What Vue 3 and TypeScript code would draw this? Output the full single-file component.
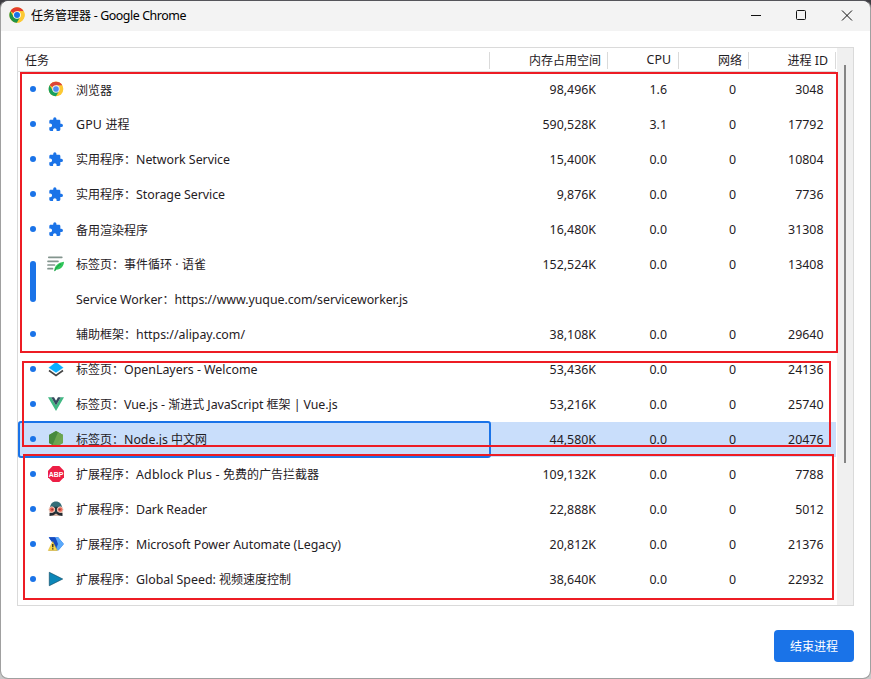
<script setup lang="ts">
interface Row {
  icon: string
  label: string
  width: number
  mem?: string
  cpu?: string
  net?: string
  pid?: string
  group?: boolean
  child?: boolean
  selected?: boolean
}

const rows: Row[] = [
  { icon: 'chrome', label: '浏览器', width: 36, mem: '98,496K', cpu: '1.6', net: '0', pid: '3048' },
  { icon: 'puzzle', label: 'GPU 进程', width: 53.5, mem: '590,528K', cpu: '3.1', net: '0', pid: '17792' },
  { icon: 'puzzle', label: '实用程序：Network Service', width: 154, mem: '15,400K', cpu: '0.0', net: '0', pid: '10804' },
  { icon: 'puzzle', label: '实用程序：Storage Service', width: 149, mem: '9,876K', cpu: '0.0', net: '0', pid: '7736' },
  { icon: 'puzzle', label: '备用渲染程序', width: 72, mem: '16,480K', cpu: '0.0', net: '0', pid: '31308' },
  { icon: 'yuque', label: '标签页：事件循环 · 语雀', width: 130, mem: '152,524K', cpu: '0.0', net: '0', pid: '13408', group: true },
  { icon: '', label: 'Service Worker：https://www.yuque.com/serviceworker.js', width: 332, child: true },
  { icon: '', label: '辅助框架：https://alipay.com/', width: 169, mem: '38,108K', cpu: '0.0', net: '0', pid: '29640' },
  { icon: 'layers', label: '标签页：OpenLayers - Welcome', width: 181.5, mem: '53,436K', cpu: '0.0', net: '0', pid: '24136' },
  { icon: 'vue', label: '标签页：Vue.js - 渐进式 JavaScript 框架 | Vue.js', width: 261.5, mem: '53,216K', cpu: '0.0', net: '0', pid: '25740' },
  { icon: 'node', label: '标签页：Node.js 中文网', width: 131, mem: '44,580K', cpu: '0.0', net: '0', pid: '20476', selected: true },
  { icon: 'abp', label: '扩展程序：Adblock Plus - 免费的广告拦截器', width: 243, mem: '109,132K', cpu: '0.0', net: '0', pid: '7788' },
  { icon: 'dark', label: '扩展程序：Dark Reader', width: 131, mem: '22,888K', cpu: '0.0', net: '0', pid: '5012' },
  { icon: 'power', label: '扩展程序：Microsoft Power Automate (Legacy)', width: 265, mem: '20,812K', cpu: '0.0', net: '0', pid: '21376' },
  { icon: 'speed', label: '扩展程序：Global Speed: 视频速度控制', width: 215, mem: '38,640K', cpu: '0.0', net: '0', pid: '22932' },
]

const title = '任务管理器 - Google Chrome'

function runs(text: string) {
  const parts = text.match(/[\u0000-\u00ff]+|[^\u0000-\u00ff]+/g) ?? []
  return parts.map((t) => ({ t, latin: t.charCodeAt(0) < 256 }))
}

// Spreads the Latin runs of a label so that it takes the given width.
const vFit = {
  mounted(el: HTMLElement, binding: { value: number }) {
    const latin = Array.from(el.querySelectorAll<HTMLElement>('.latin'))
    const count = latin.reduce((n, s) => n + (s.textContent ?? '').length, 0)
    if (!count) return
    const gap = (binding.value - el.getBoundingClientRect().width) / count
    latin.forEach((s) => { s.style.letterSpacing = gap.toFixed(3) + 'px' })
  },
}
</script>

<template>
  <div class="desktop">
    <div class="window">
      <header class="titlebar">
        <svg class="logo" viewBox="0 0 48 48">
          <circle cx="24" cy="24" r="23" fill="#fcc934" />
          <path d="M24 24 4.1 12.5A23 23 0 0 1 43.9 12.5H24Z" fill="#e33b2e" />
          <path d="M4.1 12.5A23 23 0 0 0 24 47L34 29.7 24 24 14 29.7Z" fill="#1e9447" />
          <path d="M24 12.5h19.9A23 23 0 0 1 24 47l10-17.3Z" fill="#fcc934" />
          <circle cx="24" cy="24" r="11.5" fill="#fff" />
          <circle cx="24" cy="24" r="9" fill="#1a73e8" />
        </svg>
        <span class="title"><span v-fit="155" class="fit"><span v-for="(r, i) in runs(title)" :key="i" :class="{ latin: r.latin }">{{ r.t }}</span></span></span>
        <svg class="controls" viewBox="0 0 138 30">
          <path d="M19 14.500h10" />
          <rect x="64.500" y="9.500" width="9" height="9" rx="1" />
          <path d="m110 9.500 10 10m0-10-10 10" />
        </svg>
      </header>

      <main class="content">
        <div class="table">
          <div class="grid">
            <div class="head line">
              <span class="task"><b>任务</b></span>
              <span class="mem"><b>内存占用空间</b></span>
              <span class="cpu latin"><b>CPU</b></span>
              <span class="net"><b>网络</b></span>
              <span class="pid"><b>进程<span class="latin"> ID</span></b></span>
            </div>
            <div v-for="(row, i) in rows" :key="i" class="row line" :class="{ selected: row.selected }">
              <div class="task">
                <i v-if="!row.child" class="dot" :class="{ bar: row.group }"></i>
                <i v-else class="nodot"></i>
                <svg class="icon" viewBox="0 0 16 16">
                  <g v-if="row.icon === 'chrome'" transform="translate(.3 .3) scale(.32)">
                    <circle cx="24" cy="24" r="23" fill="#fcc934" />
                    <path d="M24 24 4.1 12.5A23 23 0 0 1 43.9 12.5H24Z" fill="#dc4437" />
                    <path d="M4.1 12.5A23 23 0 0 0 24 47L34 29.7 24 24 14 29.7Z" fill="#16a05d" />
                    <circle cx="24" cy="24" r="11.5" fill="#f1f1f1" />
                    <circle cx="24" cy="24" r="8.8" fill="#4c8bf5" />
                  </g>
                  <path v-else-if="row.icon === 'puzzle'" transform="translate(0 .6) scale(.65)" fill="#1a73e8" d="M20.5 11H19V7c0-1.1-.9-2-2-2h-4V3.500a2.500 2.500 0 0 0-5 0V5H4c-1.100 0-1.990.900-1.990 2v3.800H3.500c1.490 0 2.700 1.210 2.700 2.700s-1.210 2.700-2.700 2.700H2V20c0 1.100.900 2 2 2h3.800v-1.500c0-1.490 1.210-2.700 2.700-2.700s2.700 1.210 2.700 2.700V22H17c1.100 0 2-.900 2-2v-4h1.500a2.500 2.500 0 0 0 0-5z" />
                  <g v-else-if="row.icon === 'yuque'">
                    <path d="M.8 1.300h13M0 5.300h10M0 9h6.500M0 12.700h4.500" stroke="#83958e" stroke-width="1.700" stroke-linecap="round" />
                    <path d="M6.300 15.500C6 10 10 6.500 16 5.700c-.2 4-2.700 8-8 8Z" fill="#2fc659" />
                    <path d="M6.800 15C8 11.500 11 9 13 8" stroke="#178c43" stroke-width=".8" fill="none" />
                  </g>
                  <g v-else-if="row.icon === 'layers'">
                    <path d="m1 9.500 7 5 7-5" fill="none" stroke="#444" stroke-width="1.600" />
                    <path d="M8 .7.3 6.700 8 12l7.700-5.300Z" fill="#0aafff" stroke="#fff" stroke-width=".5" />
                  </g>
                  <g v-else-if="row.icon === 'vue'">
                    <path d="M0 1.300h3.200L8 9.500l4.800-8.200H16L8 15Z" fill="#41b883" />
                    <path d="M3.200 1.300H6l2 3.400 2-3.400h2.800L8 9.500Z" fill="#35495e" />
                  </g>
                  <g v-else-if="row.icon === 'node'">
                    <path d="M8 .1 15 4v8L8 15.900 1 12V4Z" fill="#5a9d49" />
                    <path d="M8 .1 15 4 7 15.300 1 12V4Z" fill="#478a3e" />
                    <path d="m10 1.300 5 2.700v8l-5 2.800L4.500 14Z" fill="#77ad56" opacity=".75" />
                  </g>
                  <g v-else-if="row.icon === 'abp'">
                    <path d="M4.700 0h6.600L16 4.700v6.600L11.300 16H4.700L0 11.300V4.700Z" fill="#ed1e45" />
                    <text x="8" y="11" text-anchor="middle" textLength="14.600" lengthAdjust="spacingAndGlyphs" class="abp">ABP</text>
                  </g>
                  <g v-else-if="row.icon === 'dark'">
                    <path d="M2 7.500C2 3 4.500.5 8 .5s6 2.500 6 7Z" fill="#346e78" />
                    <path d="M1.500 7h13v5.500L10.500 15h-5l-4-2.500Z" fill="#d7b6a6" />
                    <path d="M1.500 15v-2.700L8 10l6.500 2.300V15l-3.500-.4L8 12.500l-3 2.100Z" fill="#242a30" />
                    <path d="M2 5.700h12v1.500H2zM7 7h2v5H7z" fill="#253940" />
                    <g fill="#ef6958" stroke="#e8d3c6" stroke-width="1"><circle cx="3.800" cy="8.600" r="2.800" /><circle cx="12.200" cy="8.600" r="2.800" /></g>
                    <circle cx="4.300" cy="8.500" r="1.100" fill="#983d37" /><circle cx="11.700" cy="8.500" r="1.100" fill="#983d37" />
                  </g>
                  <g v-else-if="row.icon === 'power'">
                    <path d="M.7 1.200h9.500L15.800 8l-5.300 6.300H.7L5.500 8Z" fill="#2067df" />
                    <path d="M.7 1.200h6L11 7 7 12 5.500 8Z" fill="#164cc0" />
                    <path d="m10.200 1.200 5.600 6.800-5.300 6.300H7.800L10 8 7.500 1.200Z" fill="#5aa9fa" />
                    <path d="M4.700 5.600 9.300 14.500H.3Z" fill="#f9d84a" stroke="#d6ad27" stroke-width=".5" />
                    <path d="M4.800 8v3.200m0 1v1.200" stroke="#222" stroke-width="1.300" />
                  </g>
                  <path v-else-if="row.icon === 'speed'" d="M1.300 1.300 14.700 8 1.300 14.700Z" fill="#0b86b8" stroke="#12506a" stroke-width=".7" />
                </svg>
                <span v-fit="row.width" class="fit"><span v-for="(r, j) in runs(row.label)" :key="j" :class="{ latin: r.latin }">{{ r.t }}</span></span>
              </div>
              <span class="mem latin">{{ row.mem }}</span>
              <span class="cpu latin">{{ row.cpu }}</span>
              <span class="net latin">{{ row.net }}</span>
              <span class="pid latin">{{ row.pid }}</span>
            </div>
          </div>
          <div class="scroll"><div class="thumb"></div></div>
        </div>
        <button class="end">结束进程</button>
      </main>
    </div>
    <div class="mark first"></div>
    <div class="mark second"></div>
    <div class="mark third"></div>
  </div>
</template>

<style>
body { margin: 0; overflow: hidden; }
</style>

<style scoped>
* { box-sizing: border-box; }
.desktop {
  position: relative;
  width: 871px;
  height: 679px;
  background: linear-gradient(#3d3c41 57px, #c9c9c9 57px);
  font: 12px/16px "Noto Sans CJK SC", sans-serif;
  color: #1f2024;
}
.window {
  display: flex;
  flex-direction: column;
  width: 871px;
  height: 679px;
  border: 1px solid #a0a0a0;
  border-top-color: #55555a;
  border-radius: 8px;
  background: #fff;
  background-clip: padding-box;
  overflow: hidden;
}
.latin { font-family: "Noto Sans", "Noto Sans CJK SC", sans-serif; font-size: 12.4px; }
.fit { display: inline-block; white-space: pre; }
.titlebar { display: flex; align-items: center; height: 30px; padding-left: 8px; background: #f3f3f3; color: #000; }
.logo { width: 16px; height: 16px; margin-top: -2px; }
.title { flex: 1; margin: -2px 0 0 6px; }
.controls { width: 138px; height: 30px; fill: none; stroke: #111; stroke-width: 1; }
.content { display: flex; flex-direction: column; align-items: flex-end; padding: 16px 16px 0; }
.table { display: flex; width: 837px; height: 559px; border: 1px solid #dadada; }
.grid { flex: 1; width: 819px; }
.line { display: grid; grid-template-columns: 472px 118px 71px 70px 87px; width: 818px; }
.head { height: 24px; padding-top: 4px; border-bottom: 1px solid #dadada; }
.head > span { height: 17px; border-right: 1px solid #dadada; text-align: right; padding-right: 6px; line-height: 17px; }
.head b { display: block; margin-top: -1px; font-weight: 400; white-space: pre; }
.head > .task { text-align: left; padding-left: 7px; }
.head .cpu { padding-right: 7px; }
.head .pid { padding-right: 7px; }
.row { height: 35px; align-items: center; }
.row > span { text-align: right; }
.row .mem { padding-right: 12px; }
.row .cpu { padding-right: 12px; }
.row .net { padding-right: 13px; }
.row .pid { padding-right: 12.500px; }
.row .task { display: flex; align-items: center; height: 35px; padding-left: 12px; white-space: nowrap; }
.dot { flex: none; width: 6px; height: 6px; margin-bottom: 1px; border-radius: 3px; background: #1a73e8; }
.dot.bar { align-self: flex-start; height: 41px; margin-top: 14px; margin-bottom: -20px; }
.nodot { width: 6px; }
.icon { flex: none; width: 16px; height: 16px; margin: 0 12px 1px; overflow: visible; }
.abp { font: bold 8px "Liberation Sans", sans-serif; fill: #fff; }
.selected { background: #c9defb; }
.selected .task { width: 473px; height: 37px; margin: -1px 0; padding-left: 10px; border: 2px solid #1a73e8; border-radius: 3px; }
.scroll { width: 16px; padding: 17px 0 0 7px; background: #f0f0f0; }
.thumb { width: 2px; height: 398px; background: #858585; }
.end { width: 80px; height: 32px; margin-top: 24px; padding: 0; border: 0; border-radius: 4px; background: #1a73e8; color: #fff; font: inherit; }
.mark { position: absolute; border: 2px solid #ed1c24; }
.first { left: 20px; top: 72px; width: 818px; height: 281px; }
.second { left: 22px; top: 361px; width: 809px; height: 86px; }
.third { left: 23px; top: 454px; width: 811px; height: 146px; }
</style>
